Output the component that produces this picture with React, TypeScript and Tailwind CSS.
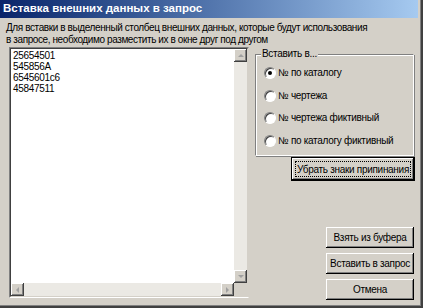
import React from "react";

const btn =
  "bg-[#d4d0c8] shadow-[inset_-1px_-1px_#000,inset_1px_1px_#fff,inset_-2px_-2px_#808080] flex items-center justify-center";

function Arrow({ dir }: { dir: "up" | "down" | "left" | "right" }) {
  const pts: Record<string, string> = {
    up: "1,4 4,1 7,4",
    down: "1,1 4,4 7,1",
    left: "4,1 1,4 4,7",
    right: "1,1 4,4 1,7",
  };
  const vertical = dir === "up" || dir === "down";
  return (
    <svg width={vertical ? 8 : 5} height={vertical ? 5 : 8} viewBox={vertical ? "0 0 8 5" : "0 0 5 8"}>
      <polygon points={pts[dir]} fill="#a0a0a0" />
    </svg>
  );
}

function ScrollBtn({ dir }: { dir: "up" | "down" | "left" | "right" }) {
  return (
    <div className="w-[13px] h-[13px] bg-[#d4d0c8] shadow-[inset_-1px_-1px_#404040,inset_1px_1px_#fff,inset_-2px_-2px_#808080] flex items-center justify-center">
      <Arrow dir={dir} />
    </div>
  );
}

function Radio({ checked, label }: { checked?: boolean; label: string }) {
  return (
    <div className="flex items-center h-[12px]">
      <div className="w-[12px] h-[12px] rounded-full bg-white border border-t-[#808080] border-l-[#808080] border-b-[#fff] border-r-[#fff] flex items-center justify-center shadow-[inset_1px_1px_#404040]">
        {checked && <div className="w-[4px] h-[4px] rounded-full bg-black" />}
      </div>
      <span className="ml-[2px] text-[10px] leading-[12px] tracking-[-0.3px]">{label}</span>
    </div>
  );
}

export default function App() {
  return (
    <div className="w-[423px] h-[308px] bg-[#d4d0c8] overflow-hidden font-['Liberation_Sans',Arial,sans-serif] text-black">
      <div className="w-[423px] h-[308px] border-r-2 border-b-2 border-r-[#404040] border-b-[#404040]">
        <div className="w-full h-full border-r border-b border-r-[#808080] border-b-[#808080] pr-[2px] pb-[2px] flex flex-col">
          <div className="h-[18px] bg-gradient-to-r from-[#0a246a] to-[#a6caf0] text-white font-bold text-[11.5px] pl-[3px] flex items-center shrink-0">
            Вставка внешних данных в запрос
          </div>
          <div className="pl-[6px] pt-[4px] text-[10px] leading-[12px] tracking-[-0.4px] whitespace-nowrap">
            Для вставки в выделенный столбец внешних данных, которые будут использования
            <br />в запросе, необходимо разместить их в окне друг под другом
          </div>
          <div className="flex flex-1 pt-[1px]">
            {/* text area */}
            <div className="ml-[9px] w-[240px] h-[251px] border border-t-[#808080] border-l-[#808080] border-b-white border-r-[#d4d0c8] flex flex-col">
              <div className="flex-1 flex border border-t-[#404040] border-l-[#404040] border-b-[#d4d0c8] border-r-[#d4d0c8] bg-white">
                <div className="flex-1 flex flex-col">
                  <div className="flex-1 pl-[2px] pt-[1px] text-[10px] leading-[11px] tracking-[-0.3px]">
                    <div>25654501</div>
                    <div>545856A</div>
                    <div>6545601с6</div>
                    <div>45847511</div>
                  </div>
                  <div className="h-[13px] bg-[#ebe9e4] flex justify-between">
                    <ScrollBtn dir="left" />
                    <ScrollBtn dir="right" />
                  </div>
                </div>
                <div className="w-[13px] flex flex-col bg-[#ebe9e4]">
                  <ScrollBtn dir="up" />
                  <div className="flex-1" />
                  <ScrollBtn dir="down" />
                  <div className="h-[13px] bg-[#d4d0c8]" />
                </div>
              </div>
            </div>
            {/* right column */}
            <div className="ml-[6px] flex flex-col">
              <div className="relative mt-[7px] w-[159px] h-[102px] border border-t-[#808080] border-l-[#808080] border-b-white border-r-white shadow-[inset_1px_1px_#fff,1px_1px_#808080]">
                <span className="absolute left-[5px] top-[-7px] bg-[#d4d0c8] px-[1px] text-[10px] leading-[12px] tracking-[-0.3px]">
                  Вставить в...
                </span>
                <div className="pl-[8px] pt-[12px] flex flex-col gap-[10.5px]">
                  <Radio checked label="№ по каталогу" />
                  <Radio label="№ чертежа" />
                  <Radio label="№ чертежа фиктивный" />
                  <Radio label="№ по каталогу фиктивный" />
                </div>
              </div>
              <div className="ml-[36px] mt-[1px] w-[124px] h-[24px] border border-black">
                <div className={btn + " w-full h-full p-[3px]"}>
                  <div className="w-full h-full border border-dotted border-black flex items-center justify-center text-[10px] tracking-[-0.3px] whitespace-nowrap">
                    Убрать знаки припинания
                  </div>
                </div>
              </div>
              <div className="flex-1" />
              <div className="ml-[71px] flex flex-col gap-[5px] mb-[3px] text-[10px] tracking-[-0.3px] whitespace-nowrap">
                <div className={btn + " w-[88px] h-[21px]"}>Взять из буфера</div>
                <div className={btn + " w-[88px] h-[21px]"}>Вставить в запрос</div>
                <div className={btn + " w-[88px] h-[21px]"}>Отмена</div>
              </div>
            </div>
          </div>
        </div>
      </div>
    </div>
  );
}
